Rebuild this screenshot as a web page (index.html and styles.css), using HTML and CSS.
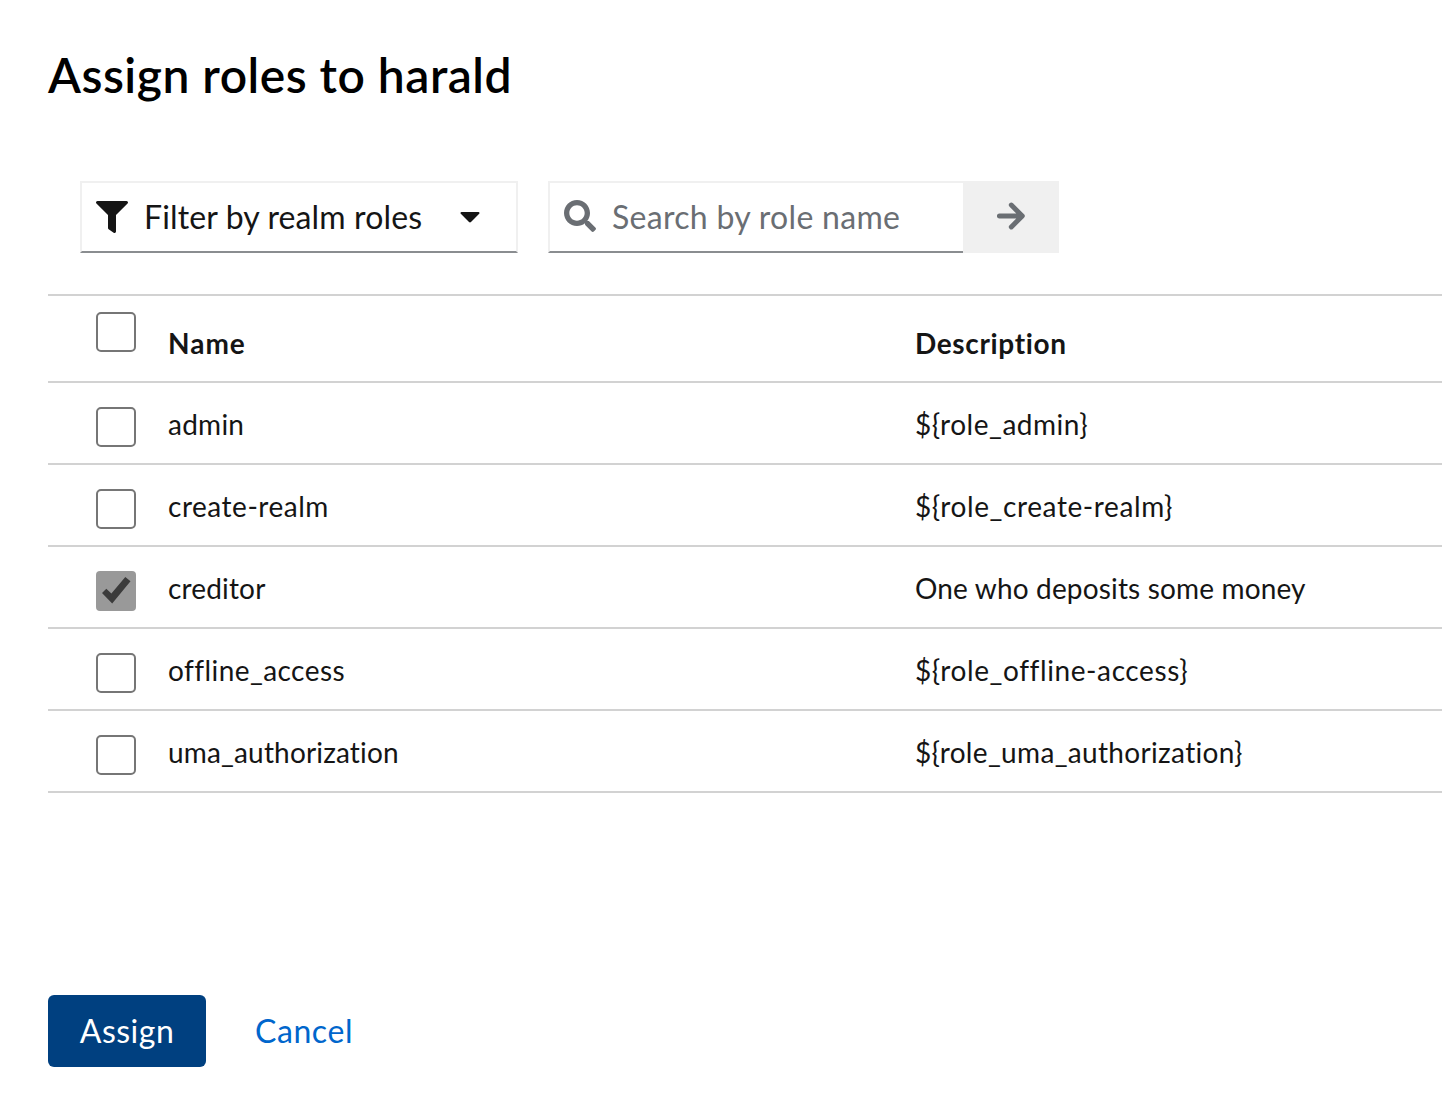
FILE: index.html
```html
<!DOCTYPE html>
<html lang="en">
<head>
<meta charset="utf-8">
<title>Assign roles to harald</title>
<link rel="stylesheet" href="styles.css">
</head>
<body>
<main class="modal">
  <h1 class="title">Assign roles to harald</h1>

  <div class="toolbar">
    <button class="filter" type="button">
      <svg class="filter-icon" width="32" height="32" viewBox="0 0 512 512" fill="currentColor"><path d="M487.976 0H24.028C2.71 0-8.047 25.866 7.058 40.971L192 225.941V432c0 7.831 3.821 15.17 10.237 19.662l80 55.98C298.02 518.69 320 507.493 320 487.98V225.941l184.947-184.97C520.021 25.896 509.338 0 487.976 0z"/></svg>
      <span class="filter-label">Filter by realm roles</span>
      <svg class="caret" width="20" height="12" viewBox="0 0 20 12" fill="currentColor"><path d="M1.500 1h17c1 0 1.400 1.100.7 1.800L11 11.100c-.6.6-1.400.6-2 0L.8 2.800C.1 2.100.5 1 1.500 1z"/></svg>
    </button>
    <div class="search">
      <div class="search-field">
        <svg class="search-icon" width="32" height="32" viewBox="0 0 512 512" fill="currentColor"><path d="M505 442.700L405.300 343c-4.500-4.500-10.600-7-17-7H372c27.600-35.300 44-79.700 44-128C416 93.100 322.900 0 208 0S0 93.100 0 208s93.100 208 208 208c48.300 0 92.700-16.400 128-44v16.300c0 6.400 2.500 12.500 7 17l99.700 99.700c9.400 9.400 24.600 9.400 33.900 0l28.300-28.300c9.400-9.400 9.400-24.600.1-34zM208 331c-68 0-123-55-123-123 0-68 55-123 123-123 68 0 123 55 123 123 0 68-55 123-123 123z"/></svg>
        <span class="search-label">Search by role name</span>
      </div>
      <button class="go" type="button" aria-label="Search">
        <svg width="28" height="32" viewBox="0 0 28 32" fill="none" stroke="currentColor" stroke-width="4.900" stroke-linecap="round" stroke-linejoin="round"><path d="M2.400 16H24.500M14.300 5L25.300 16L14.300 27"/></svg>
      </button>
    </div>
  </div>

  <table class="roles">
    <colgroup><col class="col-check"><col class="col-name"><col></colgroup>
    <thead>
      <tr><th><span class="box"></span></th><th class="t-name">Name</th><th class="t-desc">Description</th></tr>
    </thead>
    <tbody>
      <tr><td><span class="box"></span></td><td class="ls-2">admin</td><td class="ls-5">${role_admin}</td></tr>
      <tr><td><span class="box"></span></td><td class="ls-5">create-realm</td><td class="ls-6">${role_create-realm}</td></tr>
      <tr><td><span class="box checked"><svg width="40" height="40" viewBox="0 0 40 40"><path d="M6 22L10.300 17.700L15.400 22.400L29.300 6L34.500 10.200L16.200 32.500Z" fill="#3b3b3b"/></svg></span></td><td class="ls-1">creditor</td><td class="ls-1">One who deposits some money</td></tr>
      <tr><td><span class="box"></span></td><td class="ls-4">offline_access</td><td class="ls-6">${role_offline-access}</td></tr>
      <tr><td><span class="box"></span></td><td class="ls-1">uma_authorization</td><td class="ls-3">${role_uma_authorization}</td></tr>
    </tbody>
  </table>

  <footer class="actions">
    <button class="assign" type="button">Assign</button>
    <button class="cancel" type="button">Cancel</button>
  </footer>
</main>
</body>
</html>
```

FILE: styles.css
```css
* { box-sizing: border-box; }
body {
  margin: 0;
  background: #fff;
  color: #151515;
  font-family: Lato, "Open Sans", sans-serif;
  font-variant-ligatures: none;
  overflow: hidden;
}
button {
  border: 0;
  margin: 0;
  background: none;
  color: inherit;
  font: inherit;
}
svg { display: block; flex: none; }
.modal {
  display: flex;
  flex-direction: column;
  height: 1098px;
  padding: 51px 0 31px 48px;
}
.title {
  margin: 0;
  color: #000;
  font-size: 48px;
  line-height: 48px;
  font-weight: 600;
  letter-spacing: 0.5px;
}

/* Toolbar */
.toolbar {
  display: flex;
  gap: 30px;
  height: 72px;
  margin: 82px 0 41px 32px;
  font-size: 32px;
  white-space: nowrap;
}
.filter {
  display: flex;
  align-items: center;
  width: 438px;
  padding: 0 14px;
  border: 2px solid #f0f0f0;
  border-bottom-color: #8a8d90;
}
.filter-label {
  width: 308px;
  margin-left: 16px;
  padding-bottom: 2px;
  text-align: left;
  letter-spacing: 0.13px;
}
.caret { margin-left: 8px; }
.search { display: flex; width: 511px; }
.search-field {
  display: flex;
  flex: 1;
  align-items: center;
  gap: 16px;
  padding-left: 14px;
  border-top: 2px solid #f0f0f0;
  border-left: 2px solid #f0f0f0;
  border-bottom: 2px solid #8a8d90;
  color: #6a6e73;
}
.search-icon { margin-bottom: 2px; }
.search-label { padding-bottom: 2px; letter-spacing: 0.3px; }
.go {
  display: flex;
  align-items: center;
  justify-content: center;
  width: 96px;
  padding: 0 0 2px;
  background: #f0f0f0;
  color: #6a6e73;
}

/* Roles table */
.roles {
  width: 100%;
  table-layout: fixed;
  border-collapse: separate;
  border-spacing: 0;
  border-top: 2px solid #d2d2d2;
  font-size: 28px;
  line-height: 34px;
}
.col-check { width: 120px; }
.col-name { width: 747px; }
.roles th, .roles td {
  padding: 0;
  border-bottom: 2px solid #d2d2d2;
  text-align: left;
  vertical-align: middle;
}
.roles th { height: 87px; padding-top: 9px; font-weight: 700; }
.roles td { height: 82px; padding-top: 2px; }
.roles th:first-child { padding: 16px 0 0 48px; vertical-align: top; }
.roles td:first-child { padding: 8px 0 0 48px; }
.box {
  display: block;
  width: 40px;
  height: 40px;
  border: 2px solid #767676;
  border-radius: 5px;
  background: #fff;
}
.box.checked { border: 0; border-radius: 4px; background: #999; }
.t-name { letter-spacing: 1px; }
.t-desc { letter-spacing: 0.65px; }
.ls-1 { letter-spacing: 0.16px; }
.ls-2 { letter-spacing: 0.25px; }
.ls-3 { letter-spacing: 0.33px; }
.ls-4 { letter-spacing: 0.43px; }
.ls-5 { letter-spacing: 0.52px; }
.ls-6 { letter-spacing: 0.6px; }

/* Actions */
.actions {
  display: flex;
  height: 72px;
  margin-top: auto;
  font-size: 32px;
}
.assign {
  width: 158px;
  padding: 0 0 1px;
  border-radius: 6px;
  background: #004080;
  color: #fff;
  letter-spacing: 0.5px;
}
.cancel {
  width: 162px;
  margin-left: 17px;
  padding: 0 0 1px;
  color: #06c;
  letter-spacing: 0.6px;
}
```
